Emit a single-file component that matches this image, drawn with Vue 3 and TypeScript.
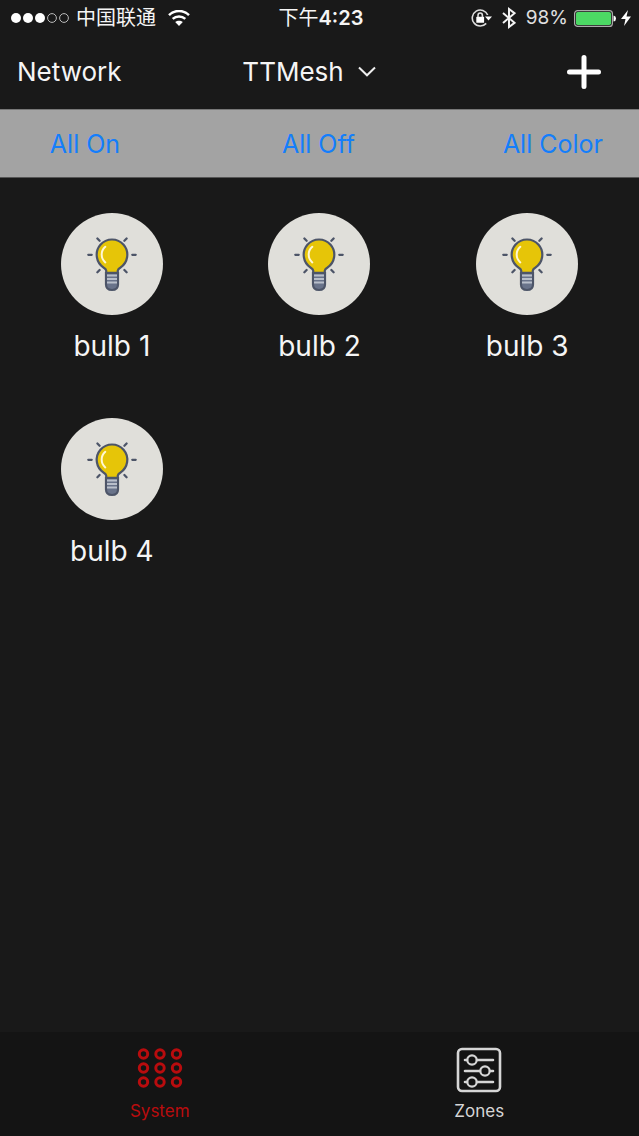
<script setup lang="ts">
import { ref } from 'vue'

type Tab = 'system' | 'zones'

const bulbs = ref<string[]>(['bulb 1', 'bulb 2', 'bulb 3', 'bulb 4'])
const actions: string[] = ['All On', 'All Off', 'All Color']
const activeTab = ref<Tab>('system')
const knobs: { x: number; y: number }[] = [
  { x: 16, y: 13 },
  { x: 29, y: 24 },
  { x: 16, y: 35 },
]
</script>

<template>
  <div class="screen">
    <header class="status">
      <div class="status-left">
        <svg class="signal" width="58" height="12" viewBox="0 0 58 12" aria-hidden="true">
          <circle cx="5" cy="6" r="5" fill="#fff" />
          <circle cx="17" cy="6" r="5" fill="#fff" />
          <circle cx="29" cy="6" r="5" fill="#fff" />
          <circle cx="41" cy="6" r="4.4" fill="none" stroke="#bbb" stroke-width="1" />
          <circle cx="53" cy="6" r="4.4" fill="none" stroke="#bbb" stroke-width="1" />
        </svg>
        <span class="carrier">中国联通</span>
        <svg class="wifi" width="22" height="17" viewBox="0 0 22 17" fill="none" stroke="#fff" stroke-width="2.5" aria-hidden="true">
          <path d="M1 5.1C6.6 -.4 15.4 -.4 21 5.1" />
          <path d="M4.700 8.900C8.200 5.600 13.800 5.600 17.300 8.900" />
          <path d="M11 16L7.200 12.100C9.300 10.200 12.700 10.200 14.800 12.100Z" fill="#fff" stroke="none" />
        </svg>
      </div>
      <time class="clock"><span>下午</span><strong>4:23</strong></time>
      <div class="status-right">
        <svg class="lock" width="21" height="20" viewBox="0 0 21 20" fill="none" stroke="#ddd" stroke-width="1.600" aria-hidden="true">
          <path d="M16.700 7A8 8 0 1 0 15.200 15.400" />
          <path d="M14 8.500H21L17.500 12.500Z" fill="#fff" stroke="none" />
          <rect x="5.300" y="8.800" width="7.800" height="6" rx=".6" fill="#fff" stroke="none" />
          <path d="M7 9V7.400A2.200 2.400 0 0 1 11.400 7.400V9" />
        </svg>
        <svg class="bluetooth" width="14" height="22" viewBox="0 0 14 22" fill="none" stroke="#f2f2f2" stroke-width="2" aria-hidden="true">
          <path d="M1 6L12.500 15.800L7 20V2L12.500 6.200L1 16" />
        </svg>
        <span class="percent">98%</span>
        <svg class="battery" width="42" height="17" viewBox="0 0 42 17" aria-hidden="true">
          <rect x=".6" y=".6" width="37.800" height="15.800" rx="3" fill="none" stroke="#aaa" stroke-width="1.200" />
          <rect x="2" y="2" width="35" height="13" rx="1.800" fill="#4cd964" />
          <path d="M39.500 5.500Q42 6 42 8.500T39.500 11.500Z" fill="#fff" />
        </svg>
        <svg class="bolt" width="10" height="16" viewBox="0 0 10 16" aria-hidden="true">
          <path d="M7 0L0 9H4.500L3 16L10 6.500H5.500Z" fill="#fff" />
        </svg>
      </div>
    </header>

    <nav class="nav">
      <button type="button" class="plain network">Network</button>
      <button type="button" class="plain mesh">
        TTMesh
        <svg width="18" height="11" viewBox="0 0 18 11" fill="none" stroke="#eee" stroke-width="2" aria-hidden="true">
          <path d="M1 1.500L9 9.300L17 1.500" />
        </svg>
      </button>
      <button type="button" class="plain add" aria-label="Add">
        <svg width="34" height="34" viewBox="0 0 34 34" fill="none" stroke="#fff" stroke-width="5" stroke-linecap="round" aria-hidden="true">
          <path d="M17 2.500V31.500M2.500 17H31.500" />
        </svg>
      </button>
    </nav>

    <div class="actions">
      <button v-for="action in actions" :key="action" type="button" class="plain action">{{ action }}</button>
    </div>

    <main class="bulbs">
      <button v-for="bulb in bulbs" :key="bulb" type="button" class="plain bulb">
        <span class="disc">
          <svg width="52" height="56" viewBox="0 0 52 56" fill="none" aria-hidden="true">
            <g stroke="#4d5568" stroke-width="2.300" stroke-linecap="round">
              <path d="M2.300 18.800H5.700M46.300 18.800H49.700M11.400 2.500L13.600 4.700M40.600 2.500L38.400 4.700M11.400 36.200L13.600 34M40.600 36.200L38.400 34" />
            </g>
            <path d="M20.200 36.800V34.500C19.800 33 18.800 32.300 17.800 31.700A15.300 15.300 0 1 1 34.200 31.700C33.200 32.300 32.200 33 31.800 34.500V36.800Z" fill="#e6c508" stroke="#4d5568" stroke-width="2.200" />
            <path d="M19.300 10.800A10.200 10.200 0 0 0 19.300 26.400" stroke="#fff7d5" stroke-width="2" stroke-linecap="round" />
            <path d="M20 37H32V48.500Q32 54 26 54T20 48.500Z" fill="#69738a" stroke="#4d5568" stroke-width="2.200" />
            <path d="M21 39.500H31M21 43H31M21 46.500H31" stroke="#b9bfca" stroke-width="1.800" />
          </svg>
        </span>
        <span class="bulb-name">{{ bulb }}</span>
      </button>
    </main>

    <footer class="tabs">
      <button type="button" class="plain tab" :class="{ active: activeTab === 'system' }" @click="activeTab = 'system'">
        <svg width="46" height="46" viewBox="0 0 46 46" fill="none" stroke="currentColor" stroke-width="3" aria-hidden="true">
          <template v-for="row in 3" :key="row">
            <circle v-for="col in 3" :key="col" :cx="6.5 + (col - 1) * 16.5" :cy="7 + (row - 1) * 14" r="4.200" />
          </template>
        </svg>
        <span>System</span>
      </button>
      <button type="button" class="plain tab" :class="{ active: activeTab === 'zones' }" @click="activeTab = 'zones'">
        <svg width="46" height="46" viewBox="0 0 46 46" fill="none" stroke="currentColor" stroke-width="2.600" stroke-linecap="round" aria-hidden="true">
          <rect x="2" y="2" width="42" height="42" rx="4" />
          <g v-for="knob in knobs" :key="knob.y">
            <path :d="`M9 ${knob.y}H${knob.x - 5}M${knob.x + 5} ${knob.y}H37`" />
            <circle :cx="knob.x" :cy="knob.y" r="4.700" stroke-width="2.200" />
          </g>
        </svg>
        <span>Zones</span>
      </button>
    </footer>
  </div>
</template>

<style>
body {
  margin: 0;
  background: #191919;
}
</style>

<style scoped>
.screen {
  display: flex;
  flex-direction: column;
  min-height: 100vh;
  background: #191919;
  color: #f5f5f5;
  font-family: Inter, "Noto Sans CJK SC", sans-serif;
}

.screen svg {
  display: block;
  flex: none;
}

.plain {
  margin: 0;
  padding: 0;
  border: 0;
  background: none;
  color: inherit;
  font: inherit;
  cursor: pointer;
}

.status {
  display: grid;
  grid-template-columns: 1fr auto 1fr;
  align-items: center;
  height: 36px;
  padding: 0 8px 0 11px;
  font-size: 20px;
  line-height: 24px;
}

.status-left,
.status-right {
  display: flex;
  align-items: center;
}

.status-right {
  justify-content: flex-end;
}

.carrier {
  margin: 0 12px 0 7px;
}

.clock strong {
  font-weight: 600;
}

.bluetooth {
  margin: 0 10px;
}

.percent {
  margin-right: 6px;
  color: #e0e0e0;
  font-size: 19px;
}

.bolt {
  margin-left: 5px;
}

.nav {
  display: grid;
  grid-template-columns: 1fr auto 1fr;
  align-items: center;
  box-sizing: border-box;
  height: 73px;
  padding: 0 38px 2px 17px;
  font-size: 26px;
  line-height: 32px;
}

.network {
  justify-self: start;
}

.mesh {
  display: flex;
  align-items: center;
  gap: 14px;
}

.add {
  justify-self: end;
}

.actions {
  display: flex;
  justify-content: space-between;
  box-sizing: border-box;
  height: 69px;
  padding: 0 36px;
  border-top: 1px solid #777;
  border-bottom: 1px solid #555;
  background: #a3a3a3;
  color: #147efb;
  font-size: 25px;
  line-height: 32px;
}

.action {
  min-width: 98px;
}

.bulbs {
  display: grid;
  grid-template-columns: repeat(3, 1fr);
  align-content: start;
  flex: 1;
  row-gap: 54px;
  padding: 35px 8px;
}

.bulb {
  display: flex;
  flex-direction: column;
  align-items: center;
  gap: 13px;
  font-size: 28px;
  line-height: 36px;
}

.disc {
  display: flex;
  align-items: center;
  justify-content: center;
  width: 102px;
  height: 102px;
  border-radius: 50%;
  background: #e0dfda;
}

.tabs {
  display: grid;
  grid-template-columns: 1fr 1fr;
  height: 104px;
  background: #141414;
}

.tab {
  display: flex;
  flex-direction: column;
  align-items: center;
  gap: 7px;
  padding-top: 15px;
  color: #d6d6d6;
  font-size: 17px;
  line-height: 22px;
}

.tab.active {
  color: #b90c0e;
}
</style>
